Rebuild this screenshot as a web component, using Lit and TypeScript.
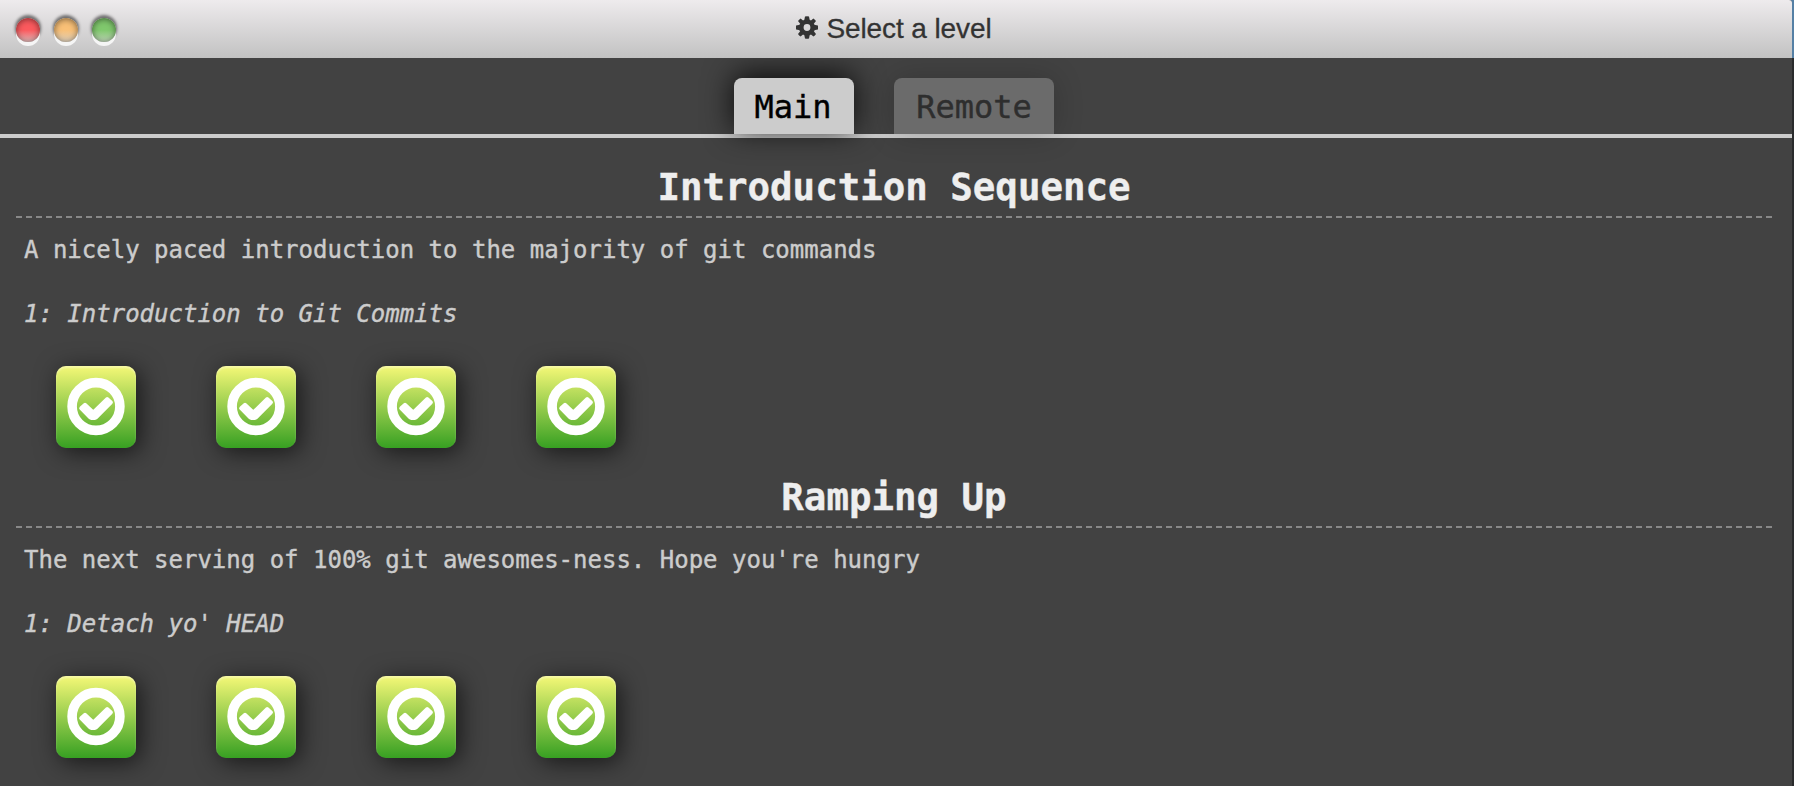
import { LitElement, html, css } from "lit";
import { customElement, property } from "lit/decorators.js";

@customElement("level-icon")
class LevelIcon extends LitElement {
  static styles = css`
    :host {
      display: block;
      width: 80px;
      height: 82px;
      border-radius: 10px;
      background: linear-gradient(#f5f877, #37a022);
      box-shadow: 4px 4px 24px rgba(0, 0, 0, 0.65), inset 0 2px 2px rgba(255, 255, 255, 0.35);
    }
    svg {
      display: block;
    }
  `;
  render() {
    return html`<svg width="80" height="82" viewBox="0 0 80 82">
      <circle cx="40" cy="40.5" r="23.9" fill="none" stroke="#fff" stroke-width="9.6" />
      <path
        d="M25 42.2 L29 38.6 L37.3 46.4 L51.2 32.8 L55.1 36.4 L40.2 51.6 Q39.6 52.2 38.8 52.2 H35.4 Q34.6 52.2 34 51.6 Z"
        fill="#fff" stroke="#fff" stroke-width="3.6" stroke-linejoin="round" />
    </svg>`;
  }
}

@customElement("level-sequence")
class LevelSequence extends LitElement {
  @property() name = "";
  @property() about = "";
  @property() level = "";
  @property({ type: Number }) count = 4;

  static styles = css`
    :host {
      display: block;
      height: 310px;
    }
    .name {
      margin: 0 0 0 16px;
      width: 1756px;
      padding-bottom: 7px;
      border-bottom: 2px dashed #888;
      color: #eee;
      font-size: 37.44px;
      line-height: 44px;
      font-weight: bold;
      text-align: center;
      -webkit-text-stroke: 0.4px #eee;
    }
    .text {
      margin: 18px 0 0 24px;
      font-size: 24px;
      line-height: 28px;
      color: #ccc;
      white-space: pre;
      -webkit-text-stroke: 0.4px #ccc;
    }
    .level {
      margin-top: 36px;
      font-style: italic;
    }
    .icons {
      display: flex;
      gap: 80px;
      margin: 38px 0 0 56px;
    }
  `;
  render() {
    return html`
      <h3 class="name">${this.name}</h3>
      <p class="text">${this.about}</p>
      <p class="text level">${this.level}</p>
      <div class="icons">${Array.from({ length: this.count }, () => html`<level-icon></level-icon>`)}</div>
    `;
  }
}

@customElement("app-root")
class AppRoot extends LitElement {
  static styles = css`
    :host {
      display: block;
      box-sizing: border-box;
      height: 786px;
      padding-right: 2px;
      overflow: hidden;
      background: linear-gradient(#5580a5 58px, #2a2b2c 58px);
      font-family: "DejaVu Sans Mono", monospace;
    }
    .window {
      height: 786px;
      overflow: hidden;
      background: #424242;
      border-top-right-radius: 3px;
    }
    .bar {
      position: relative;
      z-index: 1;
      display: grid;
      grid-template-columns: 200px 1fr 200px;
      height: 58px;
      box-sizing: border-box;
      padding-right: 4px;
      background: linear-gradient(#eeebed, #c2c2c2);
    }
    .lights {
      display: flex;
      gap: 14px;
      padding: 18px 0 0 16px;
    }
    .light {
      width: 24px;
      height: 24px;
      border-radius: 50%;
      box-shadow: 0 4px 0 #f5f5f5, 0 -2px 3px 1px rgba(0, 0, 0, 0.5),
        inset 0 1px 6px rgba(0, 0, 0, 0.5);
    }
    .red {
      background: linear-gradient(#fb5a5e 50%, #e0b9b9);
    }
    .amber {
      background: linear-gradient(#f9c077 50%, #ddcfbb);
    }
    .green {
      background: linear-gradient(#80c86d 50%, #bfd4b8);
    }
    .title {
      display: flex;
      justify-content: center;
      gap: 8px;
      font: 28px/32px "Liberation Sans", Arial, sans-serif;
      letter-spacing: -0.1px;
      color: #333;
      padding-top: 13px;
      white-space: nowrap;
      -webkit-text-stroke: 0.3px #333;
    }
    .gear {
      margin-top: 3px;
    }
    .tabs {
      display: flex;
      justify-content: center;
      gap: 40px;
      padding: 20px 4px 0 0;
      height: 56px;
      border-bottom: 4px solid #ccc;
      font-size: 32px;
      line-height: 58px;
      text-align: center;
    }
    .tab {
      box-sizing: border-box;
      width: 160px;
      height: 56px;
      border-radius: 8px 8px 0 0;
      background: #6b6b6b;
      color: #2e2e2e;
      box-shadow: 0 0 30px rgba(0, 0, 0, 0.2);
      -webkit-text-stroke: 0.4px currentColor;
    }
    .active {
      width: 120px;
      padding-right: 2px;
      background: #ccc;
      color: #000;
      box-shadow: 0 -4px 30px rgba(0, 0, 0, 0.85);
    }
    .content {
      padding-top: 27px;
    }
  `;
  render() {
    return html`
      <div class="window">
        <div class="bar">
          <div class="lights">
            <span class="light red"></span><span class="light amber"></span><span class="light green"></span>
          </div>
          <div class="title">
            <svg class="gear" width="22" height="23" viewBox="-11 -11.5 22 23" fill="#333" stroke="none">
              <path
                fill-rule="evenodd"
                d="M-8 0A8 8 0 1 0 8 0A8 8 0 1 0-8 0ZM-3.4 0A3.4 3.4 0 1 1 3.4 0A3.4 3.4 0 1 1-3.4 0Z" />
              <path
                d="M-2.8-7L-2-11.1Q0-11.5 2-11.1L2.8-7ZM-2.8 7L-2 11.1Q0 11.5 2 11.1L2.8 7ZM-7-2.8L-10.9-2Q-11.2 0-10.9 2L-7 2.8ZM7-2.8L10.9-2Q11.2 0 10.9 2L7 2.8Z" />
              <path
                d="M-3.4-6.6L-6.4-9Q-8-7.9-9-6.4L-6.6-3.4ZM3.4-6.6L6.4-9Q8-7.9 9-6.4L6.6-3.4ZM-3.4 6.6L-6.4 9Q-8 7.9-9 6.4L-6.6 3.4ZM3.4 6.6L6.4 9Q8 7.9 9 6.4L6.6 3.4Z" />
            </svg>
            <span>Select a level</span>
          </div>
        </div>
        <div class="tabs">
          <div class="tab active">Main</div>
          <div class="tab">Remote</div>
        </div>
        <div class="content">
          <level-sequence
            name="Introduction Sequence"
            about="A nicely paced introduction to the majority of git commands"
            level="1: Introduction to Git Commits"></level-sequence>
          <level-sequence
            name="Ramping Up"
            about="The next serving of 100% git awesomes-ness. Hope you're hungry"
            level="1: Detach yo' HEAD"></level-sequence>
        </div>
      </div>
    `;
  }
}
